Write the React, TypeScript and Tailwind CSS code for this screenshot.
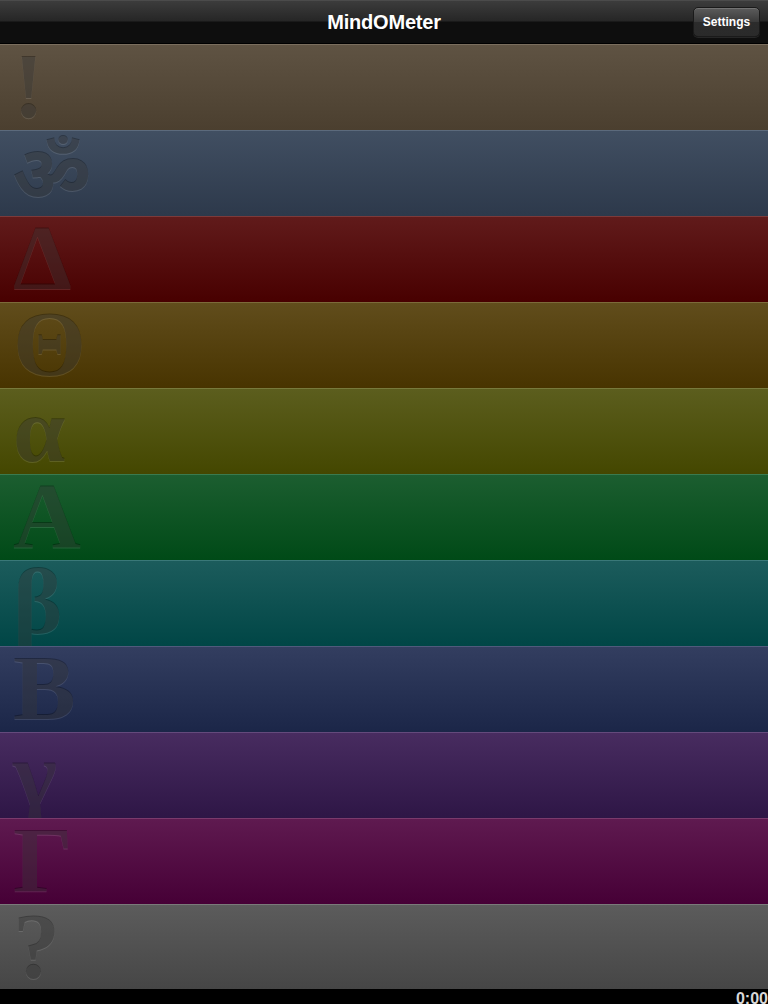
import React from "react";

const rows = [
  { g: "!", from: "#5f5343", to: "#4b3f2f", hl: "#7a6e5e" },
  { g: "ॐ", from: "#414f62", to: "#2d394b", hl: "#5c6a7c" },
  { g: "Δ", from: "#611b1b", to: "#480000", hl: "#7c3a3a" },
  { g: "Θ", from: "#614d1c", to: "#483400", hl: "#7c6a3a" },
  { g: "α", from: "#5c5e1e", to: "#444700", hl: "#787a3c" },
  { g: "Α", from: "#1c5e30", to: "#004a17", hl: "#3a7a4e" },
  { g: "β", from: "#1c5c5c", to: "#004646", hl: "#3a7878" },
  { g: "Β", from: "#333e60", to: "#1b2648", hl: "#505a7c" },
  { g: "γ", from: "#482c60", to: "#2e1646", hl: "#644a7c" },
  { g: "Γ", from: "#5f1a50", to: "#460036", hl: "#7a3a6c" },
  { g: "?", from: "#5c5c5c", to: "#464646", hl: "#7a7a7a" },
];

export default function App() {
  return (
    <div
      className="w-[768px] h-[1004px] flex flex-col bg-black overflow-hidden"
      style={{ fontFamily: '"Liberation Sans", Arial, sans-serif' }}
    >
      <div className="relative h-[44px] shrink-0 flex items-center justify-center bg-[linear-gradient(#5a5a5a_0px,#3c3c3c_1px,#262626_21px,#0e0e0e_22px,#0e0e0e_100%)] border-b border-[#000]">
        <div className="text-white font-bold text-[20px] leading-none tracking-[-0.2px]">MindOMeter</div>
        <div className="absolute right-[8px] top-[7px] w-[67px] h-[30px] rounded-[5px] border border-[#1a1a1a] bg-[linear-gradient(#5c5c5c,#3a3a3a_50%,#2c2c2c_51%,#2a2a2a)] shadow-[inset_0_1px_0_rgba(255,255,255,0.15),0_1px_0_rgba(255,255,255,0.1)] flex items-center justify-center text-white font-bold text-[12px]">
          Settings
        </div>
      </div>
      <div className="flex flex-col">
        {rows.map((r, i) => (
          <div
            key={i}
            className={`flex items-start pl-[13px] ${i === rows.length - 1 ? "h-[85px]" : "h-[86px]"}`}
            style={{
              background: `linear-gradient(${r.from}, ${r.to})`,
              boxShadow: `inset 0 1px 0 ${r.hl}`,
            }}
          >
            {r.g === "ॐ" ? (
              <span
                className="font-bold text-[78px] leading-[78px] mt-[6px] -ml-[1px] text-[rgba(0,0,0,0.3)] [text-shadow:0_1px_0_rgba(255,255,255,0.12)]"
                style={{ fontFamily: '"Liberation Serif", "Noto Sans", serif' }}
              >
                {r.g}
              </span>
            ) : (
              <span
                className="font-bold text-[94px] leading-[84px] -mt-[1px] text-[rgba(0,0,0,0.3)] [text-shadow:0_1px_0_rgba(255,255,255,0.12)]"
                style={{ fontFamily: '"Liberation Serif", "Times New Roman", serif' }}
              >
                {r.g}
              </span>
            )}
          </div>
        ))}
      </div>
      <div className="flex-1 bg-black flex justify-end items-start overflow-hidden">
        <span className="text-[#d8d8d8] font-bold text-[16px] leading-[16px] mt-[2px]">0:00</span>
      </div>
    </div>
  );
}
